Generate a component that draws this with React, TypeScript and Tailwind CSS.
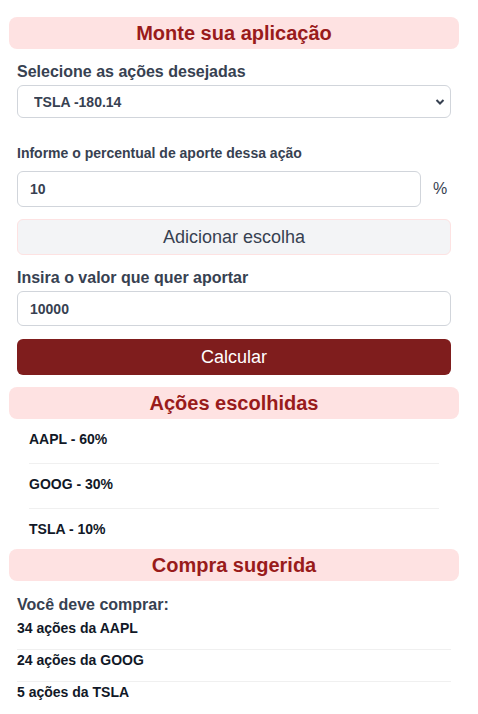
import React from "react";

function Header({ children }: { children: React.ReactNode }) {
  return (
    <div className="h-[32px] rounded-lg bg-[#fee2e2] flex items-center justify-center text-[20px] font-bold text-[#991b1b] leading-none">
      {children}
    </div>
  );
}

export default function App() {
  const chosen = ["AAPL - 60%", "GOOG - 30%", "TSLA - 10%"];
  const buys = ["34 ações da AAPL", "24 ações da GOOG", "5 ações da TSLA"];
  return (
    <div
      className="w-[450px] ml-[9px] pt-[17px] bg-white text-[#374151]"
      style={{ fontFamily: '"Liberation Sans", Arial, sans-serif' }}
    >
      <Header>Monte sua aplicação</Header>
      <div className="px-[8px]">
        <div className="mt-[13px] text-[16px] leading-[20px] font-semibold">Selecione as ações desejadas</div>
        <div className="relative mt-[3px]">
          <select className="appearance-none w-full h-[33px] rounded-md border border-[#d1d5db] bg-white pl-[16px] pt-[1px] text-[14px] font-bold text-[#374151]">
            <option>TSLA -180.14</option>
          </select>
          <svg
            className="absolute right-[6px] top-[13px] pointer-events-none"
            width="10"
            height="8"
            viewBox="0 0 10 8"
          >
            <path d="M1.5 2 L5 5.5 L8.5 2" fill="none" stroke="#374151" strokeWidth="2" />
          </svg>
        </div>
        <div className="mt-[25px] text-[14px] leading-[20px] font-semibold">Informe o percentual de aporte dessa ação</div>
        <div className="mt-[8px] flex items-center">
          <input
            readOnly
            value="10"
            className="w-[404px] h-[36px] rounded-md border border-[#d1d5db] bg-white px-[12px] text-[14px] font-bold text-[#374151]"
          />
          <span className="ml-[12px] text-[16px]">%</span>
        </div>
        <button className="mt-[12px] w-full h-[36px] rounded-md border border-[#fde2e2] bg-[#f3f4f6] text-[18px] text-[#374151]">
          Adicionar escolha
        </button>
        <div className="mt-[13px] text-[16px] leading-[20px] font-semibold">Insira o valor que quer aportar</div>
        <input
          readOnly
          value="10000"
          className="mt-[3px] block w-full h-[35px] rounded-md border border-[#d1d5db] bg-white px-[12px] text-[14px] font-bold text-[#374151]"
        />
        <button className="mt-[13px] block w-full h-[36px] rounded-md bg-[#7f1d1d] text-[18px] text-white">
          Calcular
        </button>
      </div>
      <div className="mt-[12px]">
        <Header>Ações escolhidas</Header>
      </div>
      <ul className="px-[20px]">
        {chosen.map((c, i) => (
          <li
            key={c}
            className={
              i < chosen.length - 1
                ? "pt-[10px] pb-[14px] border-b border-[#f0f0f0] text-[14px] leading-[20px] font-bold text-[#111827]"
                : "pt-[10px] pb-[10px] text-[14px] leading-[20px] font-bold text-[#111827]"
            }
          >
            {c}
          </li>
        ))}
      </ul>
      <Header>Compra sugerida</Header>
      <div className="px-[8px]">
        <div className="mt-[14px] text-[16px] leading-[20px] font-semibold">Você deve comprar:</div>
        <ul className="mt-[3px]">
          {buys.map((b, i) => (
            <li
              key={b}
              className={
                i < buys.length - 1
                  ? "pb-[11px] border-b border-[#f0f0f0] text-[14px] leading-[20px] font-bold text-[#111827]"
                  : "pb-[11px] text-[14px] leading-[20px] font-bold text-[#111827]"
              }
            >
              {b}
            </li>
          ))}
        </ul>
      </div>
    </div>
  );
}
